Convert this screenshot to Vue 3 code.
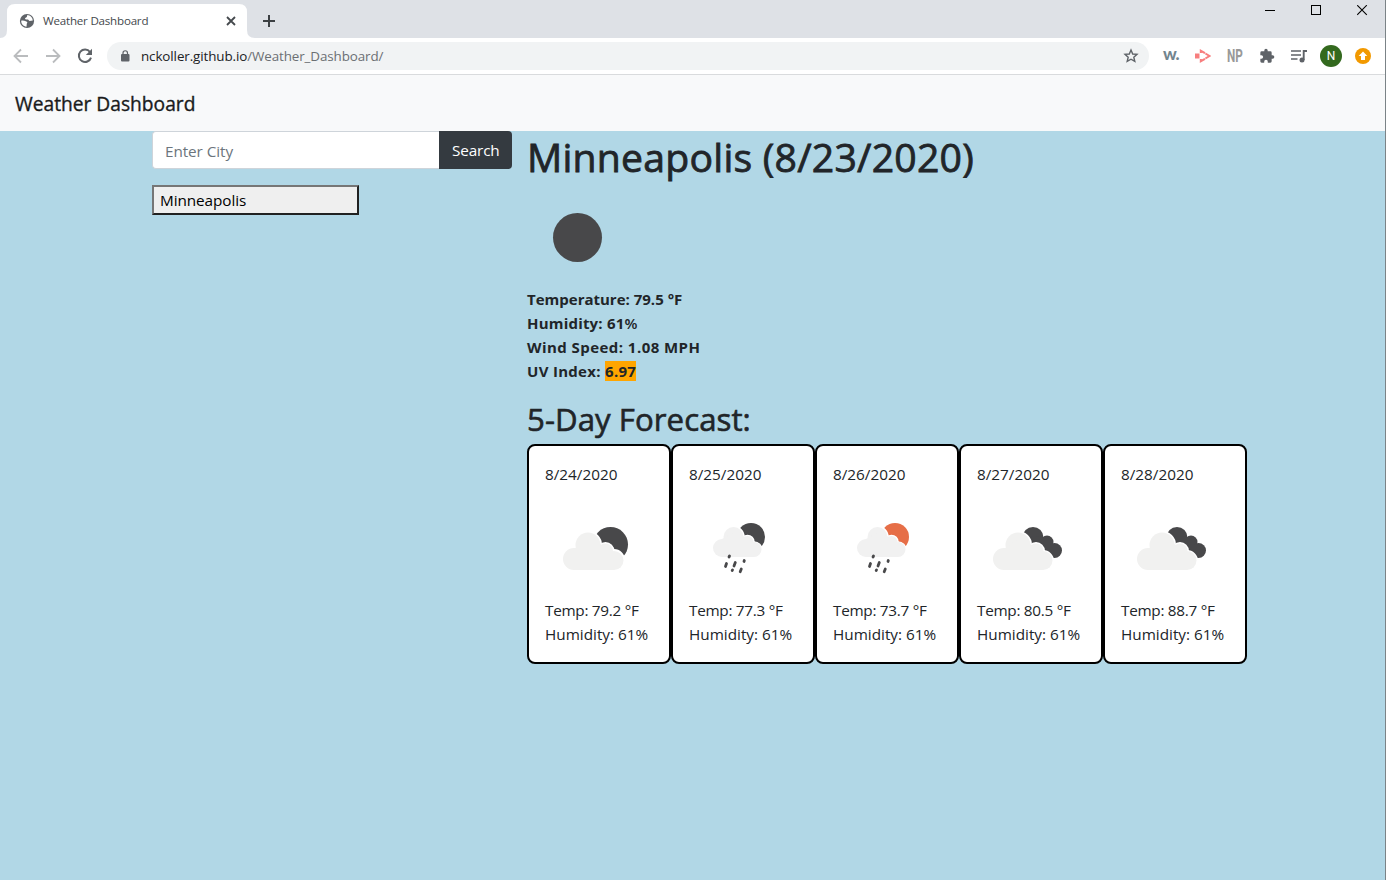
<script setup>
const days = [
  { date: '8/24/2020', icon: 'few', temp: '79.2' },
  { date: '8/25/2020', icon: 'rain-night', temp: '77.3' },
  { date: '8/26/2020', icon: 'rain-day', temp: '73.7' },
  { date: '8/27/2020', icon: 'broken', temp: '80.5' },
  { date: '8/28/2020', icon: 'broken', temp: '88.7' },
]
</script>

<template>
  <div class="window">
    <div class="tabstrip">
      <svg class="tab-shape" width="264" height="34" viewBox="0 0 264 34"><path d="M0 34Q7 34 7 26V8Q7 0 15 0H239Q247 0 247 8V26Q247 34 255 34Z" fill="#fff" /></svg>
      <div class="tab">
        <svg width="16" height="16" viewBox="0 0 16 16"><circle cx="8" cy="8" r="7.1" fill="#5f6368" /><path d="M2.2 7.8C3.8 7.2 5.6 8 6.8 8.3C8.5 8.7 8.7 10 7.8 10.6L7.5 13.7C4.3 13.5 2.1 10.9 2.2 7.8ZM8.3 2.1L7.8 4L5.9 5.2L6.7 6.6H9L10.5 8L13.8 7.6C13.6 4.5 11.3 2.3 8.3 2.1Z" fill="#fff" /></svg>
        <span class="tab-title">Weather Dashboard</span>
        <svg class="tab-x" width="10" height="10" viewBox="0 0 10 10"><path d="M1 1L9 9M9 1L1 9" stroke="#45494d" stroke-width="1.8" /></svg>
      </div>
      <svg class="plus" width="12" height="12" viewBox="0 0 12 12"><path d="M6 0V12M0 6H12" stroke="#3c4043" stroke-width="2" /></svg>
      <div class="controls">
        <svg width="11" height="11"><path d="M0 5.5H10" stroke="#000" /></svg>
        <svg width="11" height="11"><rect x=".5" y=".5" width="9" height="9" fill="none" stroke="#000" /></svg>
        <svg width="11" height="11"><path d="M.2 .2L9.8 9.8M9.8 .2L.2 9.8" stroke="#000" stroke-width="1.1" /></svg>
      </div>
    </div>
    <div class="toolbar">
      <svg class="nav" width="16" height="16" viewBox="0 0 16 16" fill="none" stroke="#babcbe" stroke-width="1.8"><path d="M15 8H2M8 1.5L1.5 8L8 14.5" /></svg>
      <svg class="nav" width="16" height="16" viewBox="0 0 16 16" fill="none" stroke="#babcbe" stroke-width="1.8"><path d="M1 8H14M8 1.5L14.5 8L8 14.5" /></svg>
      <svg class="nav" width="16" height="16" viewBox="0 0 16 16"><path d="M13 4A6.2 6.2 0 1 0 14 9.6" fill="none" stroke="#5f6368" stroke-width="2" /><path d="M15 .8V7H8.8Z" fill="#5f6368" /></svg>
      <div class="omnibox">
        <svg width="10" height="12" viewBox="0 0 10 12"><rect x="1" y="4" width="8.5" height="7.5" rx="1" fill="#5f6368" /><path d="M3 4.5V3A2.25 2.25 0 0 1 7.5 3V4.5" fill="none" stroke="#5f6368" stroke-width="1.2" /></svg>
        <span class="url">nckoller.github.io<i>/Weather_Dashboard/</i></span>
        <svg class="star" width="16" height="16" viewBox="0 0 16 16"><path d="M8 2L9.7 6L14 6.4L10.8 9.2L11.8 13.4L8 11.2L4.2 13.4L5.2 9.2L2 6.4L6.3 6Z" fill="none" stroke="#5f6368" stroke-width="1.4" /></svg>
      </div>
      <span class="w">w.</span>
      <svg class="play" width="16" height="14" viewBox="0 0 16 14"><path d="M0 4.5H4.5V9.5H0Z" fill="#f77e7e" /><path d="M5.8 4V1.8L10 4.2M10.4 4.5L14.5 7L10.4 9.5M10 9.8L5.8 12.2V10" fill="none" stroke="#f77e7e" stroke-width="2" /></svg>
      <span class="np">NP</span>
      <svg class="puzzle" width="16" height="16" viewBox="0 0 24 24"><path fill="#5f6368" d="M20.5 11H19V7a2 2 0 0 0-2-2h-4V3.5a2.5 2.5 0 0 0-5 0V5H4a2 2 0 0 0-2 2v3.8H3.5a2.7 2.7 0 0 1 0 5.4H2V20a2 2 0 0 0 2 2h3.800v-1.500a2.700 2.700 0 0 1 5.400 0V22H17a2 2 0 0 0 2-2v-4h1.500a2.500 2.500 0 0 0 0-5z" /></svg>
      <svg class="list" width="17" height="14" viewBox="0 0 17 14"><path d="M0 2H10M0 6H10M0 10H6.5" stroke="#5f6368" stroke-width="1.7" /><path d="M12.7 11V2H16" fill="none" stroke="#5f6368" stroke-width="1.9" /><circle cx="11" cy="11" r="2.5" fill="#5f6368" /></svg>
      <span class="avatar">N</span>
      <svg class="update" width="16" height="16" viewBox="0 0 16 16"><circle cx="8" cy="8" r="8" fill="#f29900" /><path d="M8 3.5L12.3 8H10V12H6V8H3.7Z" fill="#fff" /></svg>
    </div>
    <nav class="navbar"><span>Weather Dashboard</span></nav>
    <main>
      <aside>
        <div class="search">
          <div class="input"><span>Enter City</span></div>
          <div class="button"><span>Search</span></div>
        </div>
        <div class="city"><span>Minneapolis</span></div>
      </aside>
      <section>
        <h1>Minneapolis (8/23/2020)</h1>
        <svg class="current" width="100" height="100"><circle cx="50.5" cy="50.5" r="24.5" fill="#48484a" /></svg>
        <div class="stats">
          <div class="s1">Temperature: 79.5 °F</div>
          <div class="s2">Humidity: 61<span class="percent">%</span></div>
          <div class="s3">Wind Speed: 1.08 MPH</div>
          <div class="s4">UV Index: <mark>6.97</mark></div>
        </div>
        <h2>5-Day Forecast:</h2>
        <div class="cards">
          <article v-for="d in days" :key="d.date">
            <div class="date">{{ d.date }}</div>
            <svg class="wicon" width="100" height="100" viewBox="0 0 100 100">
              <g v-if="d.icon === 'few'">
                <circle cx="65.5" cy="45.5" r="17.5" fill="#48484a" />
                <g fill="#fff" stroke="#fff" stroke-width="3"><circle cx="43" cy="46" r="12.5" /><circle cx="60.5" cy="52" r="7.5" /><circle cx="69" cy="61" r="9.5" /></g>
                <g fill="#f1f1f0"><circle cx="43" cy="46" r="12.5" /><circle cx="29" cy="60" r="11" /><circle cx="60.5" cy="52" r="7.5" /><circle cx="69" cy="61.5" r="9.5" /><path d="M29 50L43 40L62 48L69 54V71H29Z" /></g>
              </g>
              <g v-else-if="d.icon === 'broken'">
                <g fill="#48484a"><circle cx="56" cy="38.5" r="10.5" /><circle cx="70" cy="43" r="6.5" /><circle cx="77.5" cy="51.5" r="7.5" /><path d="M50 38L65 37L76 48L72 56Z" /></g>
                <g fill="#fff" stroke="#fff" stroke-width="3"><circle cx="41" cy="46" r="12.5" /><circle cx="59" cy="52" r="7.5" /><circle cx="66" cy="62" r="9.5" /></g>
                <g fill="#f1f1f0"><circle cx="41" cy="46" r="12.5" /><circle cx="27" cy="60" r="11" /><circle cx="59" cy="52" r="7.5" /><circle cx="66" cy="61.5" r="9.5" /><path d="M27 50L41 40L60 48L66 54V71H27Z" /></g>
              </g>
              <g v-else>
                <circle cx="62" cy="38" r="14" :fill="d.icon === 'rain-day' ? '#e66e47' : '#48484a'" />
                <g fill="#fff" stroke="#fff" stroke-width="2.5"><circle cx="44.5" cy="38" r="10" /><circle cx="58.5" cy="43" r="6" /><circle cx="65" cy="51" r="7.5" /></g>
                <g fill="#f1f1f1"><circle cx="44.5" cy="38" r="10" /><circle cx="33" cy="49" r="9" /><circle cx="58.5" cy="43" r="6" /><circle cx="65" cy="50.5" r="7.5" /><path d="M33 40L44 34L60 39L65 44V58H33Z" /></g>
                <path d="M40.500 57L40 58M37.500 64.500L36.500 67.500M46.300 63.500L45 67M43.500 71L43.200 71.500M55.300 61.500L55 62.500M52.300 70L51.200 72.800" fill="none" stroke="#48484a" stroke-width="2.8" stroke-linecap="round" />
              </g>
            </svg>
            <div class="temp">Temp: {{ d.temp }} °F</div>
            <div class="hum">Humidity: 61%</div>
          </article>
        </div>
      </section>
    </main>
  </div>
</template>

<style>
body { margin: 0; overflow: hidden; }
</style>

<style scoped>
* { box-sizing: border-box; }
svg { display: block; flex-shrink: 0; }
.window { width: 1386px; height: 880px; background: #b1d7e6; border-right: 1px solid #7b8387; font: 15.3px/24px "Open Sans", "Noto Sans", sans-serif; color: #212529; white-space: nowrap; display: flex; flex-direction: column; overflow: hidden; }
.tabstrip { height: 38px; background: #dee1e6; display: flex; position: relative; flex-shrink: 0; }
.tab-shape { position: absolute; left: 0; top: 4px; }
.tab { position: relative; width: 247px; margin-top: 4px; padding: 0 11px 0 19px; display: flex; align-items: center; font-size: 11.6px; color: #45494d; }
.tab-title { margin-left: 8px; letter-spacing: -.22px; }
.tab-x { margin-left: auto; }
.plus { margin: 15px 0 0 16px; }
.controls { margin: 5px 17px 0 auto; display: flex; gap: 35px; }
.toolbar { height: 37px; flex-shrink: 0; background: #fff; border-bottom: 1px solid #d9dbdd; display: flex; align-items: center; padding-left: 13px; }
.nav { margin-right: 16px; }
.omnibox { width: 1042px; height: 28px; margin-left: -2px; border-radius: 14px; background: #f1f3f4; display: flex; align-items: center; padding: 0 10px 0 13px; font-size: 13.4px; color: #202124; }
.url { margin-left: 11px; letter-spacing: -.1px; }
.url i { font-style: normal; color: #6b6f73; }
.star { margin-left: auto; }
.w { margin: -4px 0 0 14px; width: 17px; font: 900 17px/20px Lato, sans-serif; letter-spacing: -.8px; color: #72858f; }
.play { margin-left: 15px; }
.np { margin: 0 0 0 16px; width: 16px; font: bold 18px/20px Roboto, sans-serif; color: #999; transform: scaleX(.65); transform-origin: left; }
.puzzle { margin-left: 16px; }
.list { margin-left: 16px; }
.avatar { margin-left: 12px; width: 22px; height: 22px; border-radius: 50%; background: #33691e; color: #fff; font: 12px/22px Roboto, sans-serif; text-align: center; }
.update { margin-left: 13px; }
.navbar { height: 56px; flex-shrink: 0; background: #f8f9fa; padding: 14px 15px; font-size: 19.2px; line-height: 30px; color: #1a1b1c; -webkit-text-stroke: .35px #1a1b1c; }
main { display: flex; padding-left: 152px; }
aside { width: 360px; margin-right: 15px; }
.search { display: flex; height: 38px; }
.input { width: 287px; border: 1px solid #ced4da; border-right: 0; border-radius: 4px 0 0 4px; background: #fff; color: #6c757d; padding: 7px 12px; letter-spacing: -.08px; }
.button { width: 73px; border-radius: 0 4px 4px 0; background: #343a40; color: #fff; padding: 7px 12px 7px 13px; letter-spacing: -.15px; }
.city { margin-top: 16px; width: 207px; height: 30px; border: 2px solid; border-color: #767676 #212121 #212121 #767676; background: #efefef; color: #000; padding: 1px 6px; letter-spacing: -.08px; }
h1 { margin: 2px 0 6px; font-size: 39.2px; line-height: 48px; font-weight: 400; letter-spacing: .22px; -webkit-text-stroke: .8px #212529; }
h2 { margin: 17px 0 6px; font-size: 31.2px; line-height: 38px; font-weight: 400; letter-spacing: .05px; -webkit-text-stroke: .6px #212529; }
.stats { font-weight: 700; font-size: 15px; }
.s2 { letter-spacing: .2px; }
.s3 { letter-spacing: .45px; }
.s4 { letter-spacing: .3px; }
.percent { font-weight: 600; }
mark { background: #ffa500; color: #212529; }
.cards { display: flex; }
article { width: 144px; height: 220px; border: 2px solid #000; border-radius: 8px; background: #fff; padding: 16px; }
.temp { letter-spacing: -.28px; }
.wicon { margin: 13px 0 -1px; }
</style>
